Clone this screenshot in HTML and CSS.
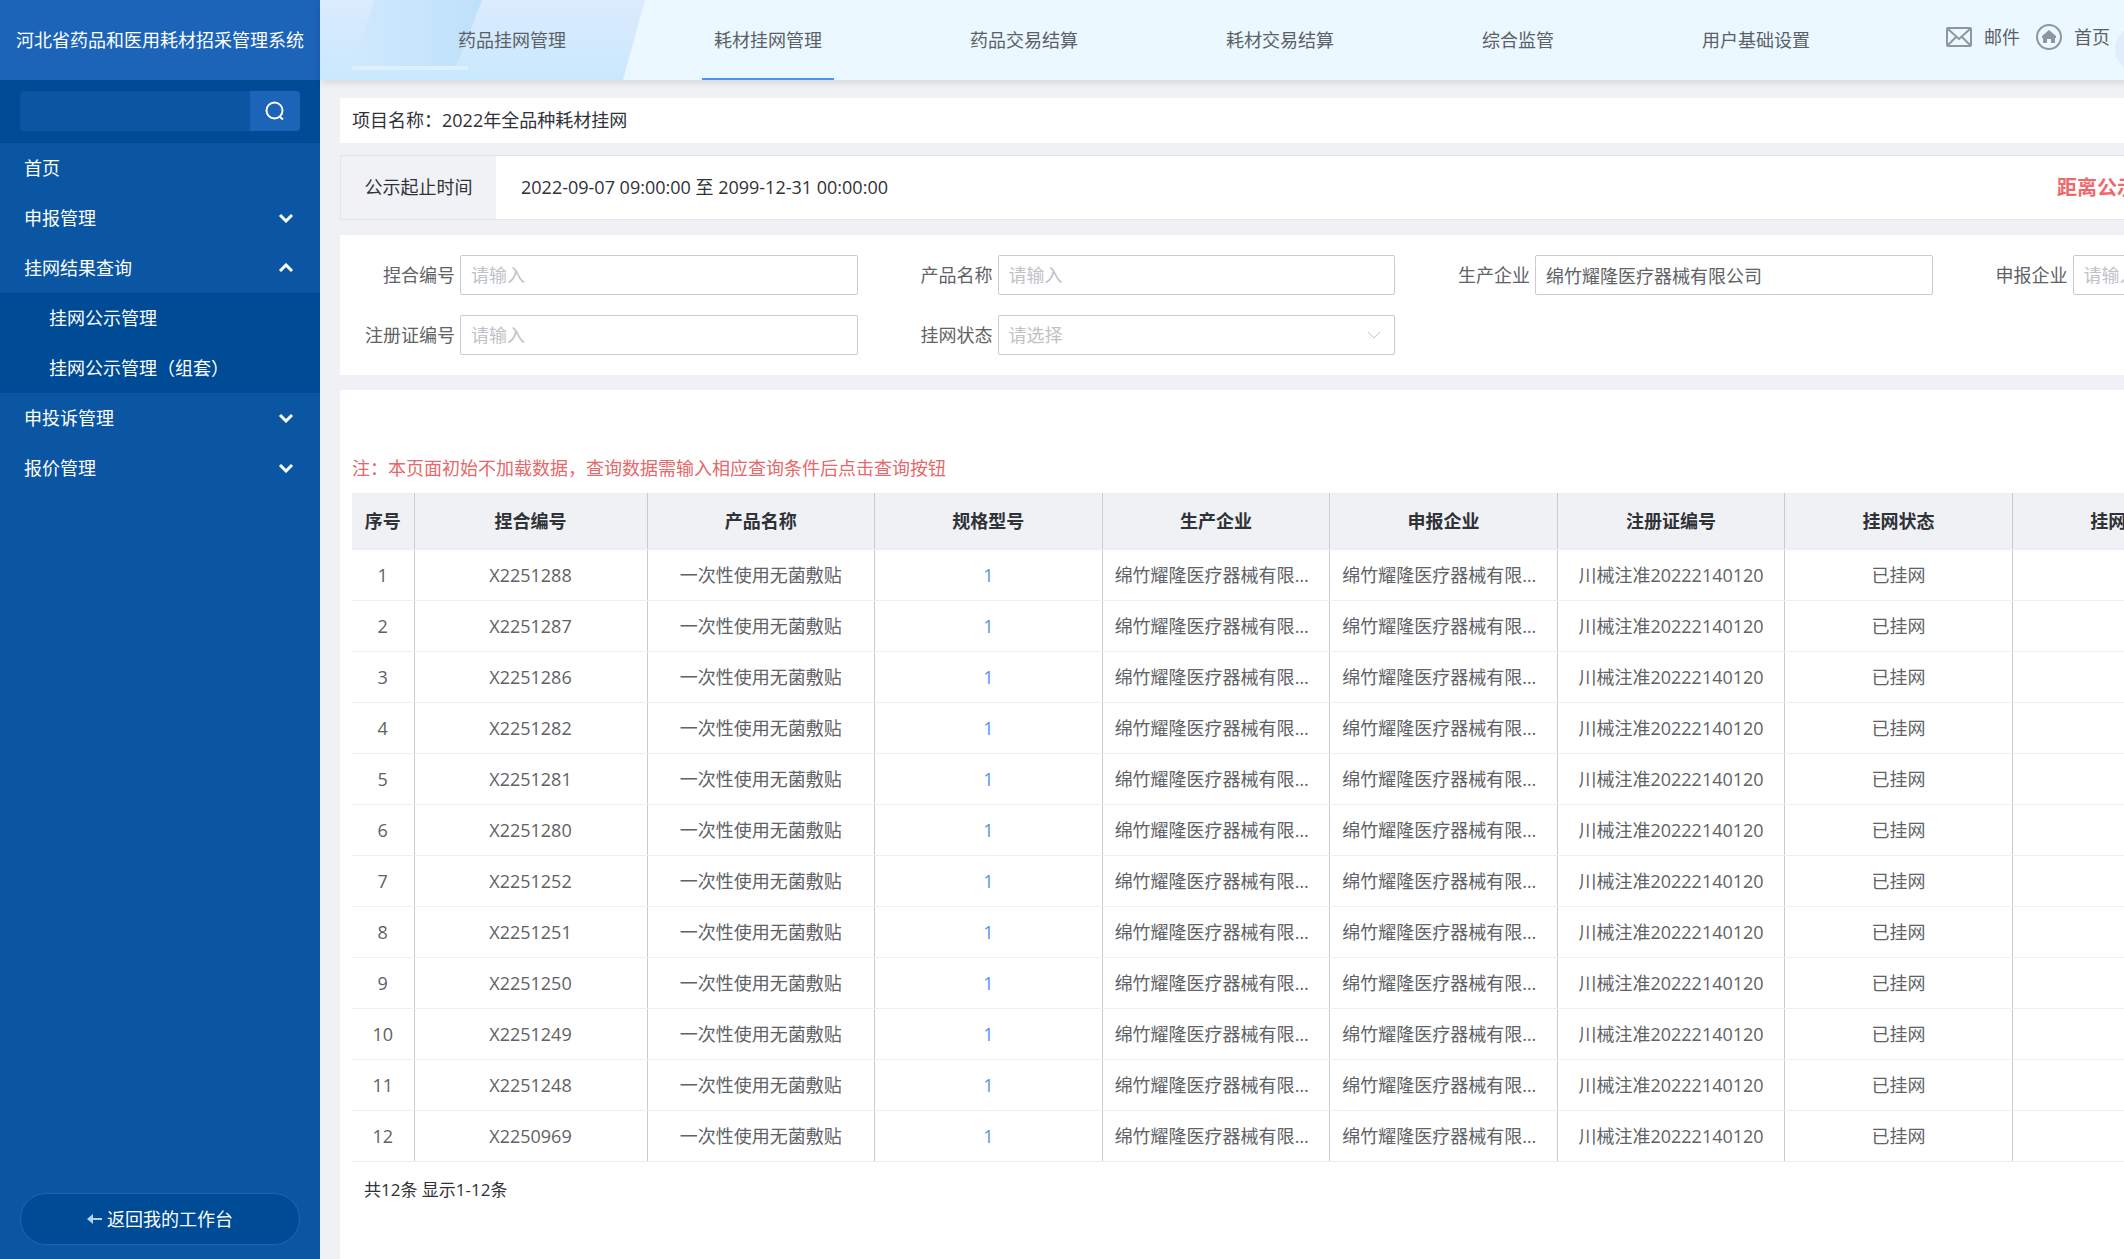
FILE: index.html
```html
<!DOCTYPE html>
<html lang="zh-CN">
<head>
    <meta charset="UTF-8">
    <meta name="viewport" content="width=device-width, initial-scale=1.0">
    <title>河北省药品和医用耗材招采管理系统</title>
    <link rel="stylesheet" href="styles.css">
</head>
<body>
    <div class="app">
        <aside class="sidebar">
            <h1 class="logo">河北省药品和医用耗材招采管理系统</h1>
            <form class="side-search">
                <input type="text" aria-label="搜索菜单">
                <button type="button" aria-label="搜索">
                    <svg viewBox="0 0 20 20"><circle cx="9.5" cy="9.5" r="8"/><path d="M14.5 15.5l3.5 3"/></svg>
                </button>
            </form>
            <nav class="menu">
                <a href="#">首页</a>
                <a href="#">申报管理<svg class="arrow" viewBox="0 0 16 10"><path d="M2 2l6 6 6-6"/></svg></a>
                <a href="#">挂网结果查询<svg class="arrow" viewBox="0 0 16 10"><path d="M2 8l6-6 6 6"/></svg></a>
                <div class="submenu">
                    <a href="#">挂网公示管理</a>
                    <a href="#">挂网公示管理（组套）</a>
                </div>
                <a href="#">申投诉管理<svg class="arrow" viewBox="0 0 16 10"><path d="M2 2l6 6 6-6"/></svg></a>
                <a href="#">报价管理<svg class="arrow" viewBox="0 0 16 10"><path d="M2 2l6 6 6-6"/></svg></a>
            </nav>
            <button class="back-btn" type="button">
                <svg viewBox="0 0 16 12"><path d="M0 6l6-5v10z"/><path d="M5 5h10v2H5z"/></svg>
                返回我的工作台
            </button>
        </aside>

        <div class="main">
            <header class="header">
                <svg class="header-bg" viewBox="0 0 330 80">
                    <defs>
                        <linearGradient id="fade-light" x1="0" y1="0" x2="0" y2="1">
                            <stop offset="0" stop-color="#dcebfd"/>
                            <stop offset="1" stop-color="#c9e8fd"/>
                        </linearGradient>
                        <linearGradient id="fade-dark" x1="0" y1="0" x2="1" y2="0">
                            <stop offset="0" stop-color="#cfe9fd"/>
                            <stop offset="1" stop-color="#bfe0fb"/>
                        </linearGradient>
                    </defs>
                    <path d="M0 0h325l-22 80H0z" fill="url(#fade-light)"/>
                    <path d="M55 0h107l-24 62q-2 4-6 4H32z" fill="url(#fade-dark)"/>
                    <path class="shape-line" d="M32 68h116"/>
                </svg>
                <nav class="top-nav">
                    <a href="#">药品挂网管理</a>
                    <a href="#" class="active">耗材挂网管理</a>
                    <a href="#">药品交易结算</a>
                    <a href="#">耗材交易结算</a>
                    <a href="#">综合监管</a>
                    <a href="#">用户基础设置</a>
                </nav>
                <div class="tools">
                    <a href="#">
                        <svg viewBox="0 0 26 26"><rect x="1" y="4" width="24" height="18" rx="1"/><path d="M2 5l11 10L24 5M2 21l8-8M24 21l-8-8"/></svg>
                        邮件
                    </a>
                    <a href="#">
                        <svg viewBox="0 0 26 26"><circle cx="13" cy="13" r="12"/><path class="solid" d="M13 6l7 6v2h-1v5h-4v-4h-4v4H7v-5H6v-2z"/></svg>
                        首页
                    </a>
                </div>
                <span class="avatar"></span>
            </header>

            <main class="content">
                <section class="card project">项目名称：2022年全品种耗材挂网</section>

                <section class="card period">
                    <div class="period-label">公示起止时间</div>
                    <div class="period-value">2022-09-07 09:00:00 至 2099-12-31 00:00:00</div>
                    <div class="countdown">距离公示</div>
                </section>

                <form class="card filters">
                    <div class="field">
                        <label for="nhbh">捏合编号</label>
                        <input type="text" id="nhbh" placeholder="请输入">
                    </div>
                    <div class="field">
                        <label for="cpmc">产品名称</label>
                        <input type="text" id="cpmc" placeholder="请输入">
                    </div>
                    <div class="field">
                        <label for="scqy">生产企业</label>
                        <input type="text" id="scqy" value="绵竹耀隆医疗器械有限公司">
                    </div>
                    <div class="field">
                        <label for="sbqy">申报企业</label>
                        <input type="text" id="sbqy" placeholder="请输入">
                    </div>
                    <div class="field">
                        <label for="zczbh">注册证编号</label>
                        <input type="text" id="zczbh" placeholder="请输入">
                    </div>
                    <div class="field">
                        <label for="gwzt">挂网状态</label>
                        <div class="select-box">
                            <select id="gwzt">
                                <option>请选择</option>
                            </select>
                            <svg viewBox="0 0 14 8"><path d="M1 1l6 6 6-6"/></svg>
                        </div>
                    </div>
                </form>

                <section class="card result">
                    <p class="note">注：本页面初始不加载数据，查询数据需输入相应查询条件后点击查询按钮</p>
                    <table>
                        <colgroup>
                            <col class="col-index">
                            <col class="col-code">
                            <col span="8">
                        </colgroup>
                        <thead>
                            <tr><th>序号</th><th>捏合编号</th><th>产品名称</th><th>规格型号</th><th>生产企业</th><th>申报企业</th><th>注册证编号</th><th>挂网状态</th><th>挂网时间</th><th></th></tr>
                        </thead>
                        <tbody>
                            <tr><td>1</td><td>X2251288</td><td>一次性使用无菌敷贴</td><td><a href="#">1</a></td><td>绵竹耀隆医疗器械有限公司</td><td>绵竹耀隆医疗器械有限公司</td><td>川械注准20222140120</td><td>已挂网</td><td></td><td></td></tr>
                            <tr><td>2</td><td>X2251287</td><td>一次性使用无菌敷贴</td><td><a href="#">1</a></td><td>绵竹耀隆医疗器械有限公司</td><td>绵竹耀隆医疗器械有限公司</td><td>川械注准20222140120</td><td>已挂网</td><td></td><td></td></tr>
                            <tr><td>3</td><td>X2251286</td><td>一次性使用无菌敷贴</td><td><a href="#">1</a></td><td>绵竹耀隆医疗器械有限公司</td><td>绵竹耀隆医疗器械有限公司</td><td>川械注准20222140120</td><td>已挂网</td><td></td><td></td></tr>
                            <tr><td>4</td><td>X2251282</td><td>一次性使用无菌敷贴</td><td><a href="#">1</a></td><td>绵竹耀隆医疗器械有限公司</td><td>绵竹耀隆医疗器械有限公司</td><td>川械注准20222140120</td><td>已挂网</td><td></td><td></td></tr>
                            <tr><td>5</td><td>X2251281</td><td>一次性使用无菌敷贴</td><td><a href="#">1</a></td><td>绵竹耀隆医疗器械有限公司</td><td>绵竹耀隆医疗器械有限公司</td><td>川械注准20222140120</td><td>已挂网</td><td></td><td></td></tr>
                            <tr><td>6</td><td>X2251280</td><td>一次性使用无菌敷贴</td><td><a href="#">1</a></td><td>绵竹耀隆医疗器械有限公司</td><td>绵竹耀隆医疗器械有限公司</td><td>川械注准20222140120</td><td>已挂网</td><td></td><td></td></tr>
                            <tr><td>7</td><td>X2251252</td><td>一次性使用无菌敷贴</td><td><a href="#">1</a></td><td>绵竹耀隆医疗器械有限公司</td><td>绵竹耀隆医疗器械有限公司</td><td>川械注准20222140120</td><td>已挂网</td><td></td><td></td></tr>
                            <tr><td>8</td><td>X2251251</td><td>一次性使用无菌敷贴</td><td><a href="#">1</a></td><td>绵竹耀隆医疗器械有限公司</td><td>绵竹耀隆医疗器械有限公司</td><td>川械注准20222140120</td><td>已挂网</td><td></td><td></td></tr>
                            <tr><td>9</td><td>X2251250</td><td>一次性使用无菌敷贴</td><td><a href="#">1</a></td><td>绵竹耀隆医疗器械有限公司</td><td>绵竹耀隆医疗器械有限公司</td><td>川械注准20222140120</td><td>已挂网</td><td></td><td></td></tr>
                            <tr><td>10</td><td>X2251249</td><td>一次性使用无菌敷贴</td><td><a href="#">1</a></td><td>绵竹耀隆医疗器械有限公司</td><td>绵竹耀隆医疗器械有限公司</td><td>川械注准20222140120</td><td>已挂网</td><td></td><td></td></tr>
                            <tr><td>11</td><td>X2251248</td><td>一次性使用无菌敷贴</td><td><a href="#">1</a></td><td>绵竹耀隆医疗器械有限公司</td><td>绵竹耀隆医疗器械有限公司</td><td>川械注准20222140120</td><td>已挂网</td><td></td><td></td></tr>
                            <tr><td>12</td><td>X2250969</td><td>一次性使用无菌敷贴</td><td><a href="#">1</a></td><td>绵竹耀隆医疗器械有限公司</td><td>绵竹耀隆医疗器械有限公司</td><td>川械注准20222140120</td><td>已挂网</td><td></td><td></td></tr>
                        </tbody>
                    </table>
                    <p class="total">共12条 显示1-12条</p>
                </section>
            </main>
        </div>
    </div>
</body>
</html>
```
FILE: styles.css
```css
:root {
    --blue: #0b56a3;
    --blue-dark: #004b95;
    --blue-light: #1c64b8;
    --bg: #f0f1f5;
    --border: #c9cbd0;
    --text: #2f3237;
    --text-secondary: #606266;
}
* {
    box-sizing: border-box;
    margin: 0;
    padding: 0;
}
body {
    overflow: hidden;
    background-color: var(--bg);
    font-family: "Open Sans", "Noto Sans CJK SC", sans-serif;
    font-size: 18px;
    line-height: 24px;
    color: var(--text);
}
a {
    color: inherit;
    text-decoration: none;
}
input, select, button {
    font: inherit;
    color: inherit;
}
svg {
    fill: none;
    flex: none;
}
.app {
    display: flex;
    min-height: 100vh;
}

/* sidebar */
.sidebar {
    display: flex;
    flex-direction: column;
    flex: none;
    width: 320px;
    background-color: var(--blue);
    color: white;
}
.logo {
    height: 80px;
    line-height: 80px;
    background-color: var(--blue-light);
    font-size: 18px;
    font-weight: normal;
    text-align: center;
    white-space: nowrap;
}
.side-search {
    display: flex;
    padding: 11px 20px 12px;
    background-color: var(--blue-dark);
}
.side-search input {
    flex: 1;
    min-width: 0;
    height: 40px;
    padding: 0 10px;
    border: none;
    border-radius: 4px 0 0 4px;
    background-color: var(--blue);
}
.side-search button {
    display: flex;
    align-items: center;
    justify-content: center;
    width: 50px;
    border: none;
    border-radius: 0 4px 4px 0;
    background-color: var(--blue-light);
    cursor: pointer;
}
.side-search svg {
    width: 20px;
    height: 20px;
    stroke: white;
    stroke-width: 2;
}
.menu a {
    display: flex;
    align-items: center;
    justify-content: space-between;
    height: 50px;
    padding: 0 26px 0 24px;
}
.submenu {
    background-color: var(--blue-dark);
}
.menu .submenu a {
    padding-left: 49px;
}
.arrow {
    width: 16px;
    height: 10px;
    stroke: white;
    stroke-width: 3;
}
.back-btn {
    display: flex;
    align-items: center;
    justify-content: center;
    gap: 4px;
    height: 52px;
    margin: auto 20px 14px;
    border: 1px solid var(--blue-light);
    border-radius: 26px;
    background-color: var(--blue-dark);
    cursor: pointer;
}
.back-btn svg {
    width: 16px;
    height: 12px;
    fill: #b4d2f4;
}

/* header */
.main {
    flex: 1;
    min-width: 2180px;
}
.header {
    position: relative;
    display: flex;
    height: 80px;
    padding-left: 126px;
    background-color: #ebf8ff;
    box-shadow: 0 2px 8px rgba(0, 0, 0, 0.12);
}
.header-bg {
    position: absolute;
    left: 0;
    top: 0;
    width: 330px;
    height: 80px;
}
.shape-line {
    stroke: #e0effd;
    stroke-width: 4;
}
.top-nav {
    position: relative;
    display: flex;
    gap: 124px;
    color: #5a6066;
}
.top-nav a {
    padding: 0 12px;
    line-height: 80px;
    white-space: nowrap;
}
.top-nav .active {
    box-shadow: inset 0 -2px #4a96e8;
}
.tools {
    display: flex;
    align-items: center;
    gap: 16px;
    height: 74px;
    margin-left: 124px;
    color: #5a6066;
}
.tools a {
    display: flex;
    align-items: center;
    gap: 12px;
}
.tools svg {
    width: 26px;
    height: 26px;
    stroke: #8e96a0;
    stroke-width: 2;
}
.tools .solid {
    fill: #8e96a0;
    stroke: none;
}
.avatar {
    width: 46px;
    height: 46px;
    margin: 26px 0 0 5px;
    border-radius: 50%;
    background-color: #e0edfd;
}

/* content */
.content {
    display: flex;
    flex-direction: column;
    min-height: calc(100vh - 80px);
    padding: 18px 20px 0;
}
.card {
    background-color: white;
}
.project {
    margin-bottom: 12px;
    padding: 0 12px;
    line-height: 45px;
}
.period {
    display: flex;
    margin-bottom: 15px;
    border: 1px solid #e3e5ea;
    line-height: 63px;
}
.period-label {
    width: 155px;
    background-color: #f1f2f6;
    text-align: center;
}
.period-value {
    flex: 1;
    padding-left: 25px;
}
.countdown {
    width: 422px;
    color: #ec6a6c;
    font-size: 20px;
    font-weight: bold;
}
.filters {
    display: grid;
    grid-template-columns: repeat(4, 1fr);
    gap: 20px 30px;
    margin-bottom: 15px;
    padding: 20px 10px;
    color: var(--text-secondary);
}
.field {
    display: flex;
    align-items: center;
    gap: 5px;
}
.field label {
    width: 105px;
    text-align: right;
}
.field input,
.field select {
    flex: 1;
    width: 100%;
    min-width: 0;
    height: 40px;
    padding: 0 10px;
    border: 1px solid var(--border);
    border-radius: 2px;
    background-color: white;
}
.field input::placeholder,
.field select {
    color: #bfc2c8;
}
.select-box {
    position: relative;
    display: flex;
    flex: 1;
}
.select-box select {
    appearance: none;
}
.select-box svg {
    position: absolute;
    right: 14px;
    top: 16px;
    width: 14px;
    height: 8px;
    stroke: #bfc2c8;
    pointer-events: none;
}

/* result table */
.result {
    flex: 1;
    padding: 66px 12px 0;
}
.note {
    margin-bottom: 13px;
    color: #e5686a;
}
table {
    width: 100%;
    table-layout: fixed;
    border-collapse: collapse;
}
.col-index {
    width: 62px;
}
.col-code {
    width: 233px;
}
th, td {
    height: 51px;
    padding: 0 12px;
    border-right: 1px solid var(--border);
    border-bottom: 1px solid #ebeef2;
    overflow: hidden;
    text-align: center;
    text-overflow: ellipsis;
    white-space: nowrap;
}
th {
    height: 56px;
    background-color: #eff1f5;
}
th:first-child,
td:first-child {
    padding: 0;
}
td {
    color: var(--text-secondary);
}
td a {
    color: #4f94ee;
}
.total {
    padding: 16px 12px;
    font-size: 17px;
}
```
